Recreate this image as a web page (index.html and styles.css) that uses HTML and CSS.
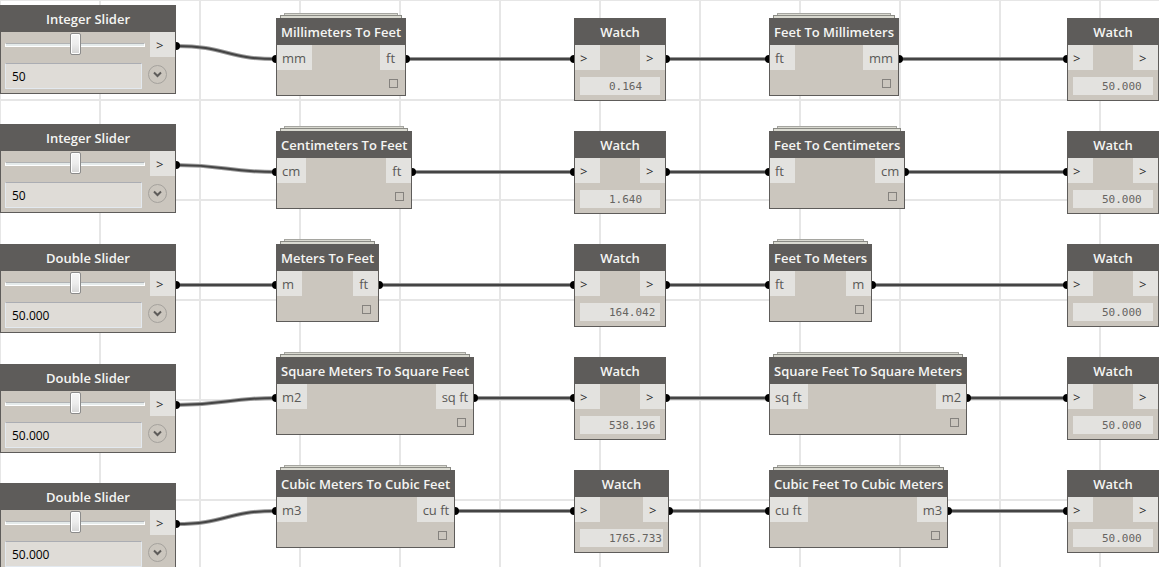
FILE: index.html
```html
<!DOCTYPE html>
<html lang="en">
<head>
<meta charset="utf-8">
<title>Unit conversion graph</title>
<link rel="stylesheet" href="styles.css">
</head>
<body>
<main class="canvas" id="canvas">
  <svg class="wires" aria-hidden="true">
    <g class="wire-shade">
      <path d="M176 46C226 46 226 59 276 59M340 59H620M620 59H830M830 59H1100"/>
      <path d="M176 165C226 165 226 172 276 172M340 172H620M620 172H830M830 172H1100"/>
      <path d="M176 285H276M340 285H620M620 285H830M830 285H1100"/>
      <path d="M176 405C226 405 226 398 276 398M340 398H620M620 398H830M830 398H1100"/>
      <path d="M176 524C226 524 226 511 276 511M340 511H620M620 511H830M830 511H1100"/>
    </g>
    <g class="wire-core">
      <path d="M176 46C226 46 226 59 276 59M340 59H620M620 59H830M830 59H1100"/>
      <path d="M176 165C226 165 226 172 276 172M340 172H620M620 172H830M830 172H1100"/>
      <path d="M176 285H276M340 285H620M620 285H830M830 285H1100"/>
      <path d="M176 405C226 405 226 398 276 398M340 398H620M620 398H830M830 398H1100"/>
      <path d="M176 524C226 524 226 511 276 511M340 511H620M620 511H830M830 511H1100"/>
    </g>
  </svg>
</main>
<script src="graph.js"></script>
</body>
</html>
```
FILE: styles.css
```css
* {
  box-sizing: border-box;
}

body {
  margin: 0;
  overflow: hidden;
  font-family: "Open Sans", "Noto Sans", sans-serif;
  font-size: 13px;
  color: #5a5957;
}

.canvas {
  position: relative;
  min-height: 100vh;
  background-color: #fff;
  background-image:
    linear-gradient(to right, #e6e6e6 2px, transparent 2px),
    linear-gradient(to bottom, #e6e6e6 2px, transparent 2px);
  background-size: 100px 100px;
  background-position: -1px -1px;
}

.wires {
  position: absolute;
  inset: 0;
  width: 100%;
  height: 100%;
}

.wires path {
  fill: none;
}

.wire-shade {
  stroke: #9a9a9a;
  stroke-width: 4;
}

.wire-core {
  stroke: #444;
  stroke-width: 2;
}

/* Nodes sit at free positions on the canvas */
.node {
  position: absolute;
}

.at-source { left: 0; }
.at-convert { left: 276px; }
.at-watch { left: 574px; }
.at-back { left: 769px; }
.at-result { left: 1067px; }

.row-1 { top: 18px; }
.row-2 { top: 131px; }
.row-3 { top: 244px; }
.row-4 { top: 357px; }
.row-5 { top: 470px; }

.slider-1 { top: 5px; }
.slider-2 { top: 124px; }
.slider-3 { top: 244px; }
.slider-4 { top: 364px; }
.slider-5 { top: 483px; }

.card {
  position: relative;
  border: 1px solid #5e5c5a;
  background: #cbc6be;
}

.title {
  margin: 0;
  padding: 0 4px;
  height: 26px;
  line-height: 26px;
  font-size: 13px;
  font-weight: 600;
  text-align: center;
  white-space: nowrap;
  color: #f5f5f3;
  background: #5e5c5a;
}

.ports {
  display: flex;
  justify-content: space-between;
}

.port {
  position: relative;
  min-width: 25px;
  height: 25px;
  padding: 0 6px 0 5px;
  line-height: 26px;
  white-space: nowrap;
  background: #e3e2df;
}

.port-out {
  padding: 0 5px 0 6px;
}

.port-flow {
  color: #2e2e2d;
}

.port::after {
  content: "";
  position: absolute;
  top: 10px;
  width: 4px;
  height: 8px;
  background: #000;
}

.port-in::after {
  right: calc(100% + 1px);
  border-radius: 4px 0 0 4px;
}

.port-out::after {
  left: calc(100% + 1px);
  border-radius: 0 4px 4px 0;
}

/* Sheets behind a node whose inputs are laced */
.sheet {
  position: absolute;
  height: 8px;
  border: 1px solid #8a8a84;
  background: #d9d9d0;
}

.sheet-back {
  top: -5px;
  left: 8px;
  right: 8px;
  border-color: #a5a5a0;
}

.sheet-mid {
  top: -3px;
  left: 4px;
  right: 4px;
}

.lacing {
  display: flex;
  justify-content: flex-end;
  padding: 9px 7px 7px;
}

.lacing-box {
  appearance: none;
  width: 9px;
  height: 9px;
  margin: 0;
  border: 1px solid #85827e;
}

.watch {
  min-width: 92px;
}

.value {
  display: block;
  margin: 7px 5px 5px;
  padding: 0 1px 0 29px;
  height: 18px;
  line-height: 20px;
  font-family: "DejaVu Sans Mono", monospace;
  font-size: 11px;
  color: #666461;
  background: #e3e2df;
}

.slider {
  width: 176px;
}

.slider-row {
  display: flex;
  align-items: flex-start;
}

.range {
  appearance: none;
  flex: 1;
  min-width: 0;
  height: 25px;
  margin: 0 5px 0 4px;
  background: transparent;
}

.range::-webkit-slider-runnable-track {
  height: 4px;
  border: 1px solid #fff;
  border-top-color: #b0b2b4;
  background: #e4eaea;
}

.range::-webkit-slider-thumb {
  appearance: none;
  width: 11px;
  height: 22px;
  margin-top: -11px;
  border: 1px solid #8b8b8b;
  border-radius: 2px;
  background: linear-gradient(#f5f5f5, #ededed 50%, #d4d4d4);
  box-shadow: inset 0 0 0 1px #fff;
}

.entry-row {
  display: flex;
  align-items: center;
  gap: 6px;
  padding: 6px 8px 4px 4px;
}

.entry {
  flex: 1;
  min-width: 0;
  height: 26px;
  padding: 0 6px;
  border: 1px solid #e3e9ef;
  border-top-color: #abadb3;
  border-radius: 1px;
  font-family: inherit;
  font-size: 12px;
  color: #000;
  background: #dfdcd7;
}

.expand {
  width: 19px;
  height: 19px;
  margin-bottom: 4px;
  padding: 0;
  border: 1px solid #a5a29d;
  border-radius: 50%;
  background: transparent;
}

.expand svg {
  display: block;
  width: 17px;
  height: 17px;
  fill: none;
  stroke: #5e5c5a;
  stroke-width: 2;
}
```
FILE: graph.js
```js
const canvas = document.getElementById("canvas");

const rows = [
  { kind: "Integer", start: "50", a: "Millimeters", b: "Feet", ua: "mm", ub: "ft", mid: "0.164" },
  { kind: "Integer", start: "50", a: "Centimeters", b: "Feet", ua: "cm", ub: "ft", mid: "1.640" },
  { kind: "Double", start: "50.000", a: "Meters", b: "Feet", ua: "m", ub: "ft", mid: "164.042" },
  { kind: "Double", start: "50.000", a: "Square Meters", b: "Square Feet", ua: "m2", ub: "sq ft", mid: "538.196" },
  { kind: "Double", start: "50.000", a: "Cubic Meters", b: "Cubic Feet", ua: "m3", ub: "cu ft", mid: "1765.733" }
];

const ports = (input, output, flow = "") =>
  `<div class="ports"><span class="port port-in ${flow}">${input}</span><span class="port port-out ${flow}">${output}</span></div>`;

const slider = (row, n) => `
  <section class="node at-source slider-${n}">
    <div class="card slider">
      <h2 class="title">${row.kind} Slider</h2>
      <div class="slider-row">
        <input class="range" type="range" min="0" max="100" value="50" aria-label="${row.kind} slider ${n}">
        <span class="port port-out port-flow">&gt;</span>
      </div>
      <div class="entry-row">
        <input class="entry" type="text" value="${row.start}" aria-label="Value ${n}">
        <button class="expand" type="button" aria-label="Range settings ${n}">
          <svg viewBox="0 0 17 17"><path d="M5 6.5 8.5 10 12 6.5"/></svg>
        </button>
      </div>
    </div>
  </section>`;

const convert = (from, to, input, output, place) => `
  <section class="node ${place}">
    <div class="sheet sheet-back"></div>
    <div class="sheet sheet-mid"></div>
    <div class="card">
      <h2 class="title">${from} To ${to}</h2>
      ${ports(input, output)}
      <div class="lacing"><input class="lacing-box" type="checkbox" aria-label="${from} to ${to} lacing"></div>
    </div>
  </section>`;

const watch = (value, place) => `
  <section class="node ${place}">
    <div class="card watch">
      <h2 class="title">Watch</h2>
      ${ports("&gt;", "&gt;", "port-flow")}
      <output class="value">${value}</output>
    </div>
  </section>`;

rows.forEach((row, i) => {
  const n = i + 1;
  canvas.insertAdjacentHTML("beforeend",
    slider(row, n) +
    convert(row.a, row.b, row.ua, row.ub, `at-convert row-${n}`) +
    watch(row.mid, `at-watch row-${n}`) +
    convert(row.b, row.a, row.ub, row.ua, `at-back row-${n}`) +
    watch("50.000", `at-result row-${n}`));
});
```
